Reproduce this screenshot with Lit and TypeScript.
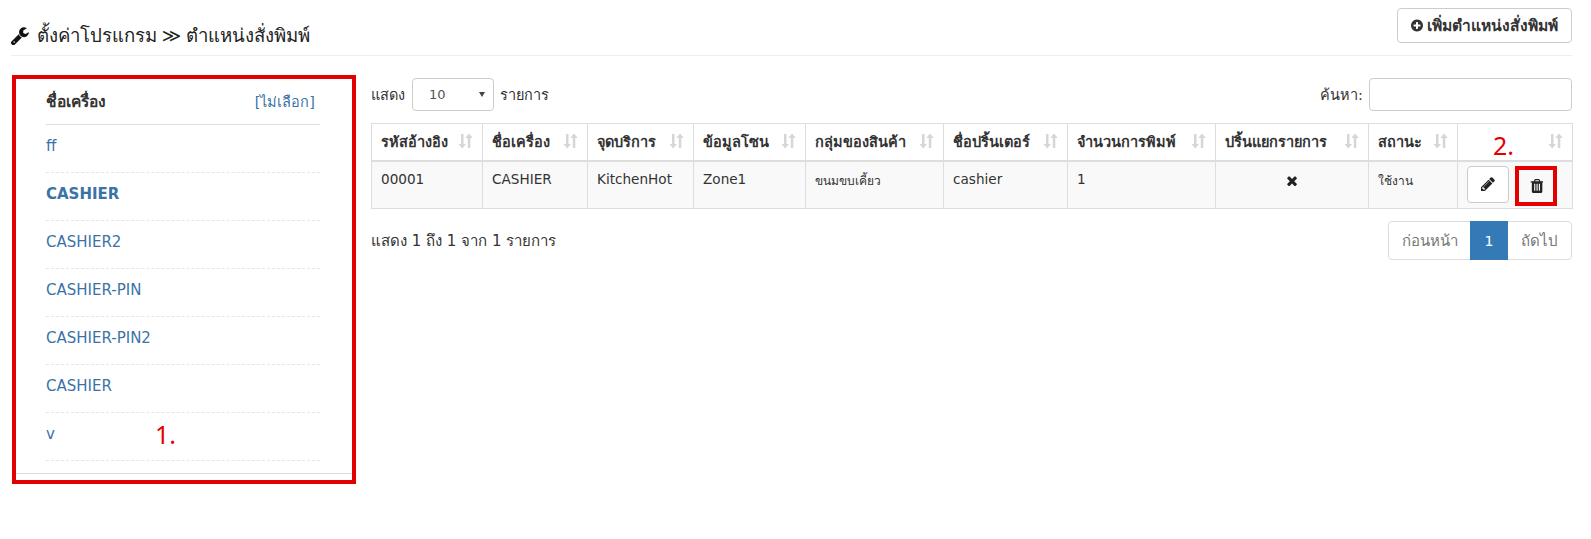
import { LitElement, html, css } from "lit";
import { customElement } from "lit/decorators.js";

const sortIcon = html`<svg class="sort" viewBox="0 0 15 16" width="15" height="16"><path fill="#d6d6d6" d="M3 1h2.500v10H8L4.200 15.500.5 11H3zM9.800 15V5H7.300L11 .5 14.800 5h-2.500v10z"/></svg>`;
const cols: [string, number][] = [
  ["รหัสอ้างอิง", 111], ["ชื่อเครื่อง", 105], ["จุดบริการ", 106], ["ข้อมูลโซน", 112], ["กลุ่มของสินค้า", 138], ["ชื่อปริ้นเตอร์", 124], ["จำนวนการพิมพ์", 148], ["ปริ้นแยกรายการ", 153], ["สถานะ", 89], ["", 115],
];

@customElement("app-root")
export class AppRoot extends LitElement {
  static styles = css`
    :host { display: block; width: 1591px; height: 539px; background: #fff; box-sizing: border-box; padding: 0 19px 0 11px; font-family: "DejaVu Sans", "Noto Sans", sans-serif; font-size: 14.5px; color: #333; overflow: hidden; }
    a { color: #3c73a6; text-decoration: none; }
    .top { display: flex; justify-content: space-between; align-items: flex-start; height: 56px; box-sizing: border-box; border-bottom: 1px solid #eee; padding-top: 8px; }
    .title { font-size: 18.6px; color: #222; display: flex; align-items: center; gap: 8px; margin-top: 13px; font-family: "Noto Sans", "DejaVu Sans", sans-serif; }
    .addbtn { display: flex; align-items: center; gap: 4px; width: 175px; height: 35px; box-sizing: border-box; padding: 0 13px; border: 1px solid #ccc; border-radius: 4px; font-weight: bold; font-size: 15.6px; background: #fff; white-space: nowrap; }
    .body { display: flex; margin-top: 19px; gap: 15px; align-items: flex-start; }
    .side { width: 344px; height: 409px; margin-left: 1px; box-sizing: border-box; border: 4px solid #e30000; }
    .sideinner { height: 395px; box-sizing: border-box; border-bottom: 1px solid #ddd; padding: 0 32px 0 30px; }
    .sidehead { display: flex; justify-content: space-between; align-items: center; height: 45px; border-bottom: 1px solid #ddd; padding: 0 5px 0 0; font-weight: bold; font-size: 15.5px; }
    .sidehead a { font-weight: normal; font-size: 14.5px; }
    .item { display: flex; align-items: center; border-bottom: 1px dashed #e5e5e5; padding: 0 0 6px; box-sizing: border-box; height: 48px; font-size: 15px; }
    .item.active { font-weight: bold; }
    .note { position: absolute; color: #e30000; font-family: "Noto Sans", sans-serif; font-size: 25px; line-height: 30px; }
    .main { flex: 1; min-width: 0; position: relative; }
    .ctl { display: flex; justify-content: space-between; align-items: center; height: 33px; margin-bottom: 12px; margin-top: 3px; }
    .ctl > div { display: flex; align-items: center; gap: 6px; }
    .select { width: 82px; height: 33px; margin-left: 1px; box-sizing: border-box; border: 1px solid #ccc; border-radius: 4px; display: flex; align-items: center; justify-content: space-between; padding: 0 8px 0 16px; font-size: 13px; color: #555; }
    .caret { width: 0; height: 0; border-left: 3px solid transparent; border-right: 3px solid transparent; border-top: 5px solid #444; }
    .input { width: 203px; height: 33px; box-sizing: border-box; border: 1px solid #ccc; border-radius: 4px; }
    table { border-collapse: collapse; table-layout: fixed; width: 1201px; }
    th, td { border: 1px solid #ddd; text-align: left; box-sizing: border-box; padding: 0 9px; }
    th { height: 37px; border-bottom-width: 2px; white-space: nowrap; font-weight: bold; padding-bottom: 1px; }
    th > div { display: flex; justify-content: space-between; align-items: center; }
    td { height: 48px; background: #f9f9f9; padding-top: 9px; vertical-align: top; font-size: 13.6px; }
    td.small { font-size: 12px; }
    td.act { padding: 4px 0 0 9px; }
    td.ctr { text-align: center; padding-top: 11px; }
    .acts { display: flex; gap: 6px; }
    .ib { width: 42px; height: 37px; box-sizing: border-box; border: 1px solid #ccc; border-radius: 4px; background: #fff; display: flex; align-items: center; justify-content: center; }
    .ib.del { border: 4px solid #e30000; border-radius: 0; height: 40px; background: #f9f9f9; }
    .foot { display: flex; justify-content: space-between; align-items: flex-start; margin-top: 12px; }
    .info { padding-top: 8px; font-size: 15px; }
    .pager { display: flex; height: 39px; border: 1px solid #ddd; border-radius: 4px; box-sizing: border-box; font-size: 15px; color: #777; }
    .pager span { display: flex; align-items: center; justify-content: center; }
    .pager .prev { width: 81px; }
    .pager .next { width: 63px; }
    .pager .on { width: 38px; background: #337ab7; color: #fff; margin: -1px 0; font-size: 14px; }
  `;

  render() {
    const items = ["ff", "CASHIER", "CASHIER2", "CASHIER-PIN", "CASHIER-PIN2", "CASHIER", "v"];
    return html`
      <div class="top">
        <div class="title">
          <svg width="18" height="18" viewBox="100 100 1640 1640"><path fill="#111" d="M448 1472q0-26-19-45t-45-19-45 19-19 45 19 45 45 19 45-19 19-45zm644-420-682 682q-37 37-90 37-52 0-91-37l-106-108q-38-36-38-90 0-53 38-91l681-681q39 98 114.500 173.500t173.500 114.500zm634-435q0 39-23 106-47 134-164.500 217.500t-258.500 83.500q-185 0-316.500-131.500t-131.500-316.500 131.500-316.500 316.500-131.500q58 0 121.500 16.500t107.500 46.500q16 11 16 28t-16 28l-293 169v224l193 107q5-3 79-48.500t135.500-81 70.500-35.500q15 0 23.500 10t8.500 25z"/></svg>
          <span>ตั้งค่าโปรแกรม ≫ ตำแหน่งสั่งพิมพ์</span>
        </div>
        <div class="addbtn">
          <svg width="13" height="13" viewBox="128 128 1536 1536"><path fill="#333" d="M1344 960v-128q0-26-19-45t-45-19h-256v-256q0-26-19-45t-45-19h-128q-26 0-45 19t-19 45v256h-256q-26 0-45 19t-19 45v128q0 26 19 45t45 19h256v256q0 26 19 45t45 19h128q26 0 45-19t19-45v-256h256q26 0 45-19t19-45zm320-64q0 209-103 385.500t-279.500 279.500-385.500 103-385.500-103-279.500-279.500-103-385.500 103-385.500 279.500-279.500 385.500-103 385.500 103 279.500 279.500 103 385.500z"/></svg>
          <span>เพิ่มตำแหน่งสั่งพิมพ์</span>
        </div>
      </div>
      <div class="body">
        <div class="side">
          <div class="sideinner">
            <div class="sidehead"><span>ชื่อเครื่อง</span><a>[ไม่เลือก]</a></div>
            ${items.map((t, i) => html`<div class="item ${i === 1 ? "active" : ""}"><a>${t}</a></div>`)}
          </div>
        </div>
        <div class="main">
          <div class="ctl">
            <div>แสดง <div class="select"><span>10</span><i class="caret"></i></div> รายการ</div>
            <div>ค้นหา: <div class="input"></div></div>
          </div>
          <table>
            <colgroup>${cols.map((c) => html`<col style="width:${c[1]}px" />`)}</colgroup>
            <thead><tr>${cols.map((c) => html`<th><div><span>${c[0]}</span>${sortIcon}</div></th>`)}</tr></thead>
            <tbody><tr>
              <td>00001</td><td>CASHIER</td><td>KitchenHot</td><td>Zone1</td><td class="small">ขนมขบเคี้ยว</td><td>cashier</td><td>1</td>
              <td class="ctr"><svg width="10" height="10" viewBox="280 320 1220 1220"><path fill="#222" d="M1490 1322q0 40-28 68l-136 136q-28 28-68 28t-68-28l-294-294-294 294q-28 28-68 28t-68-28l-136-136q-28-28-28-68t28-68l294-294-294-294q-28-28-28-68t28-68l136-136q28-28 68-28t68 28l294 294 294-294q28-28 68-28t68 28l136 136q28 28 28 68t-28 68l-294 294 294 294q28 28 28 68z"/></svg></td>
              <td class="small">ใช้งาน</td>
              <td class="act"><div class="acts">
                <div class="ib"><svg width="14" height="14" viewBox="128 128 1536 1536"><path fill="#222" d="M491 1536l91-91-235-235-91 91v107h128v128h107zm523-928q0-22-22-22-10 0-17 7l-542 542q-7 7-7 17 0 22 22 22 10 0 17-7l542-542q7-7 7-17zm-54-192l416 416-832 832h-416v-416zm683 96q0 53-37 90l-166 166-416-416 166-165q36-38 90-38 53 0 91 38l235 234q37 39 37 91z"/></svg></div>
                <div class="ib del"><svg width="13" height="14" viewBox="128 128 1408 1536"><path fill="#222" d="M704 1376v-704q0-14-9-23t-23-9h-64q-14 0-23 9t-9 23v704q0 14 9 23t23 9h64q14 0 23-9t9-23zm256 0v-704q0-14-9-23t-23-9h-64q-14 0-23 9t-9 23v704q0 14 9 23t23 9h64q14 0 23-9t9-23zm256 0v-704q0-14-9-23t-23-9h-64q-14 0-23 9t-9 23v704q0 14 9 23t23 9h64q14 0 23-9t9-23zm-544-992h448l-48-117q-7-9-17-11h-317q-10 2-17 11zm928 32v64q0 14-9 23t-23 9h-96v948q0 83-47 143.500t-113 60.500h-832q-66 0-113-58.500t-47-141.500v-952h-96q-14 0-23-9t-9-23v-64q0-14 9-23t23-9h309l70-167q15-37 54-63t79-26h320q40 0 79 26t54 63l70 167h309q14 0 23 9t9 23z"/></svg></div>
              </div></td>
            </tr></tbody>
          </table>
          <div class="foot">
            <div class="info">แสดง 1 ถึง 1 จาก 1 รายการ</div>
            <div class="pager"><span class="prev">ก่อนหน้า</span><span class="on">1</span><span class="next">ถัดไป</span></div>
          </div>
          <div class="note" style="left:1122px;top:55px">2.</div>
        </div>
      </div>
      <div class="note" style="left:155px;top:419px">1.</div>
    `;
  }
}
